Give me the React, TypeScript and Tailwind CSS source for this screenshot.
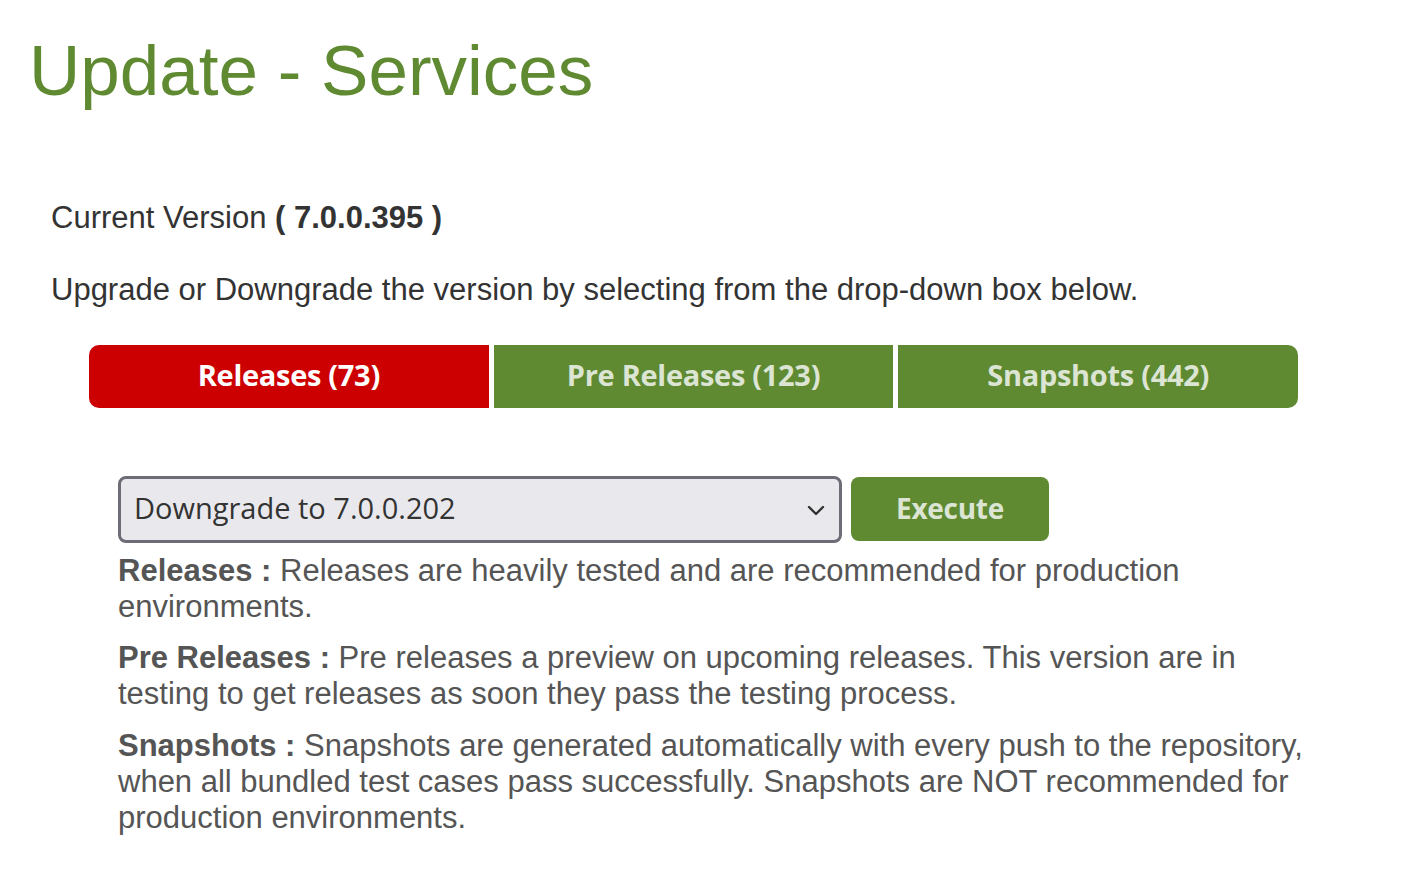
import React from 'react';

const tabs = [
  { id: 'releases', label: 'Releases (73)' },
  { id: 'pre', label: 'Pre Releases (123)' },
  { id: 'snapshots', label: 'Snapshots (442)' },
];

export default function App() {
  const active = 'releases';

  return (
    <div className="min-h-screen bg-white font-['Liberation_Sans',Arial,sans-serif] text-[#333]">
      <h1 className="pl-[29px] pt-[26px] text-[71px] leading-[90px] text-[#5f8a32]">Update - Services</h1>

      <div className="pl-[51px] pt-[84px]">
        <p className="text-[31px] leading-[36px]">
          Current Version <b>( 7.0.0.395 )</b>
        </p>
        <p className="mt-[36px] text-[31px] leading-[36px]">
          Upgrade or Downgrade the version by selecting from the drop-down box below.
        </p>
      </div>

      <div className="mt-[37px] ml-[89px] flex w-[1209px] gap-[5px] font-['Open_Sans',sans-serif]">
        {tabs.map((t, i) => (
          <button
            key={t.id}
            className={
              'h-[63px] flex-1 pb-[3px] text-[29px] font-bold tracking-[-0.3px] ' +
              (t.id === active ? 'bg-[#cc0000] text-white ' : 'bg-[#5f8a32] text-[#dce5d3] ') +
              (i === 0 ? 'rounded-l-[10px] ' : '') +
              (i === tabs.length - 1 ? 'rounded-r-[10px]' : '')
            }
          >
            {t.label}
          </button>
        ))}
      </div>

      <div className="mt-[68px] ml-[118px] flex items-start gap-[9px]">
        <div className="relative flex h-[67px] w-[724px] items-center rounded-[8px] border-[3px] border-[#6d6d78] bg-[#e9e9ed] pb-[3px] pl-[13px]">
          <span className="font-['Open_Sans',sans-serif] text-[29px] text-[#333]">Downgrade to 7.0.0.202</span>
          <svg className="absolute right-[14px] top-1/2 -translate-y-1/2" width="18" height="12" viewBox="0 0 18 12" fill="none">
            <path d="M2 3l7 7 7-7" stroke="#333" strokeWidth="2.4" strokeLinecap="round" strokeLinejoin="round" />
          </svg>
        </div>
        <button className="mt-[1px] h-[64px] w-[198px] rounded-[8px] bg-[#5f8a32] pb-[3px] font-['Open_Sans',sans-serif] text-[28px] font-bold tracking-[-0.3px] text-[#dce5d3]">
          Execute
        </button>
      </div>

      <div className="ml-[118px] mt-[10px] w-[1200px] text-[31px] leading-[36px] text-[#555]">
        <p>
          <b>Releases :</b> Releases are heavily tested and are recommended for production environments.
        </p>
        <p className="mt-[15px]">
          <b>Pre Releases :</b> Pre releases a preview on upcoming releases. This version are in testing to get releases as soon they pass the testing process.
        </p>
        <p className="mt-[16px]">
          <b>Snapshots :</b> Snapshots are generated automatically with every push to the repository, when all bundled test cases pass successfully. Snapshots are NOT recommended for production environments.
        </p>
      </div>
    </div>
  );
}
